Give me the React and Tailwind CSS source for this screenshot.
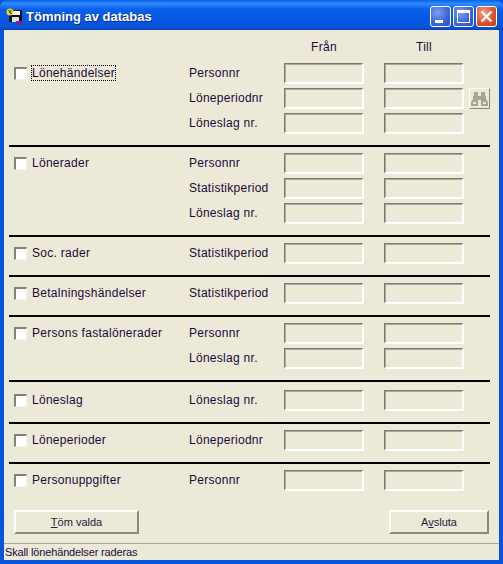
const sections = [
  { label: "Lönehändelser", focus: true, rows: ["Personnr", "Löneperiodnr", "Löneslag nr."], pt: "pt-[0px]", pb: "pb-[11px]" },
  { label: "Lönerader", rows: ["Personnr", "Statistikperiod", "Löneslag nr."], pt: "pt-[6px]", pb: "pb-[11px]" },
  { label: "Soc. rader", rows: ["Statistikperiod"], pt: "pt-[6px]", pb: "pb-[11px]" },
  { label: "Betalningshändelser", rows: ["Statistikperiod"], pt: "pt-[6px]", pb: "pb-[11px]" },
  { label: "Persons fastalönerader", rows: ["Personnr", "Löneslag nr."], pt: "pt-[6px]", pb: "pb-[11px]" },
  { label: "Löneslag", rows: ["Löneslag nr."], pt: "pt-[8px]", pb: "pb-[11px]" },
  { label: "Löneperioder", rows: ["Löneperiodnr"], pt: "pt-[6px]", pb: "pb-[11px]" },
  { label: "Personuppgifter", rows: ["Personnr"], pt: "pt-[6px]", pb: "pb-[0px]" },
];

function Field() {
  return <div className="w-[80px] h-[21px] border-t border-l border-r-2 border-b-2 border-t-[#7c7a6c] border-l-[#7c7a6c] border-r-white border-b-white shadow-[inset_1px_1px_0_#aca899] bg-[#ece9d8]" />;
}

function Checkbox() {
  return <div className="w-[13px] h-[13px] border-t-2 border-l-2 border-r border-b border-t-[#85836f] border-l-[#85836f] border-r-[#f5f3e8] border-b-[#f5f3e8] bg-white shrink-0" />;
}

function Binoculars() {
  return (
    <div className="w-[21px] h-[21px] ml-[5px] flex items-center justify-center border border-t-white border-l-white border-r-[#8c8975] border-b-[#8c8975] bg-[#ece9d8]">
      <svg width="17" height="15" viewBox="0 0 17 15" fill="#a8a594">
        <path d="M3 1h4v4h3V1h4v3l1 1v3l2 3v4h-7V9H7v6H0v-4l2-3V5l1-1z" />
        <path d="M2 11h3v2H2zM12 11h3v2h-3z" fill="#ece9d8" />
      </svg>
    </div>
  );
}

function Section({ s, index }) {
  return (
    <div className={`flex ${s.pt} ${s.pb}`}>
      <div className="w-[170px] pl-[10px] flex items-start">
        <div className="flex items-center h-[21px]">
          <Checkbox />
          <span className={`ml-[4px] mb-[2px] px-[1px] leading-[16px] ${s.focus ? "outline outline-1 outline-dotted outline-black -outline-offset-1" : ""}`}>
            {s.label}
          </span>
        </div>
      </div>
      <div className="flex flex-col gap-[4px] pl-[15px]">
        {s.rows.map((r, i) => (
          <div key={r} className="flex items-center h-[21px]">
            <span className="w-[95px] mb-[2px]">{r}</span>
            <Field />
            <div className="w-[20px]" />
            <Field />
            {index === 0 && i === 1 && <Binoculars />}
          </div>
        ))}
      </div>
    </div>
  );
}

function CaptionButton({ kind }) {
  const bg = kind === "close"
    ? "bg-[radial-gradient(circle_at_35%_30%,#f0a080,#e0532c_55%,#c23a14)]"
    : "bg-[radial-gradient(circle_at_35%_30%,#7d9ff0,#3f68d8_55%,#2a4cc0)]";
  return (
    <div className={`w-[21px] h-[21px] rounded-[3px] border border-white ${bg} relative flex items-center justify-center`}>
      {kind === "min" && <div className="w-[8px] h-[3px] bg-white absolute left-[4px] bottom-[3px]" />}
      {kind === "max" && <div className="w-[13px] h-[13px] border border-white border-t-[3px]" />}
      {kind === "close" && (
        <svg width="13" height="13" viewBox="0 0 13 13" stroke="white" strokeWidth="2.4">
          <path d="M1.5 1.5l10 10M11.5 1.5l-10 10" />
        </svg>
      )}
    </div>
  );
}

function AppIcon() {
  return (
    <svg width="17" height="17" viewBox="0 0 17 17" className="shrink-0">
      <rect x="3" y="2" width="13" height="12" fill="#111" />
      <rect x="6" y="3" width="8" height="4" fill="#fff" />
      <rect x="6" y="9" width="7" height="5" fill="#ddd" />
      <circle cx="4" cy="4" r="3.5" fill="#e8d820" />
      <path d="M2.5 2l3 4M5.5 2l-2 2 2 2" stroke="#111" strokeWidth="0.8" fill="none" />
      <rect x="10" y="13" width="6" height="3" fill="#8a1a9a" />
      <rect x="11" y="16" width="2" height="1" fill="#8a1a9a" />
    </svg>
  );
}

function Button({ children, className }) {
  return (
    <div className={`h-[24px] flex items-center justify-center border-2 border-t-white border-l-white border-r-[#8c8975] border-b-[#8c8975] bg-[#ece9d8] text-[11px] tracking-normal text-[#22223a] ${className}`}>
      <span>{children}</span>
    </div>
  );
}

export default function App() {
  return (
    <div className="w-[503px] h-[564px] flex flex-col bg-[#0855dd] text-[12px] tracking-[0.28px] text-[#1a0a3a] font-['Liberation_Sans',sans-serif] overflow-hidden">
      {/* Title bar */}
      <div className="h-[30px] shrink-0 flex items-center pt-[2px] pl-[6px] pr-[6px] rounded-t-[7px] bg-[linear-gradient(180deg,#0a5fe8_0%,#2f8bfa_12%,#0a60ea_30%,#0555e0_70%,#0a56d8_90%,#0342b8_100%)]">
        <AppIcon />
        <span className="ml-[3px] mt-[1px] text-white font-bold text-[13px] tracking-normal [text-shadow:1px_1px_#0a2a90]">Tömning av databas</span>
        <div className="ml-auto flex gap-[2px]">
          <CaptionButton kind="min" />
          <CaptionButton kind="max" />
          <CaptionButton kind="close" />
        </div>
      </div>

      {/* Client area */}
      <div className="flex-1 mx-[4px] mb-[4px] bg-[#ece9d8] flex flex-col min-h-0">
        <div className="flex h-[33px] pt-[9px] leading-[16px]">
          <div className="w-[360px] text-center pl-[280px]">Från</div>
          <div className="w-[80px] text-center ml-[20px]">Till</div>
        </div>
        {sections.map((s, i) => (
          <div key={s.label}>
            {i > 0 && <div className="h-[2px] bg-black ml-[5px] mr-[9px]" />}
            <Section s={s} index={i} />
          </div>
        ))}
        <div className="flex justify-between pl-[10px] pr-[10px] mt-[19px]">
          <Button className="w-[125px]"><span className="underline">T</span>öm valda</Button>
          <Button className="w-[100px]">A<span className="underline">v</span>sluta</Button>
        </div>
        <div className="mt-auto h-[17px] border-t border-[#aca899] pl-[1px] leading-[16px] whitespace-nowrap text-[11px] tracking-[-0.15px]">
          Skall lönehändelser raderas
        </div>
      </div>
    </div>
  );
}
